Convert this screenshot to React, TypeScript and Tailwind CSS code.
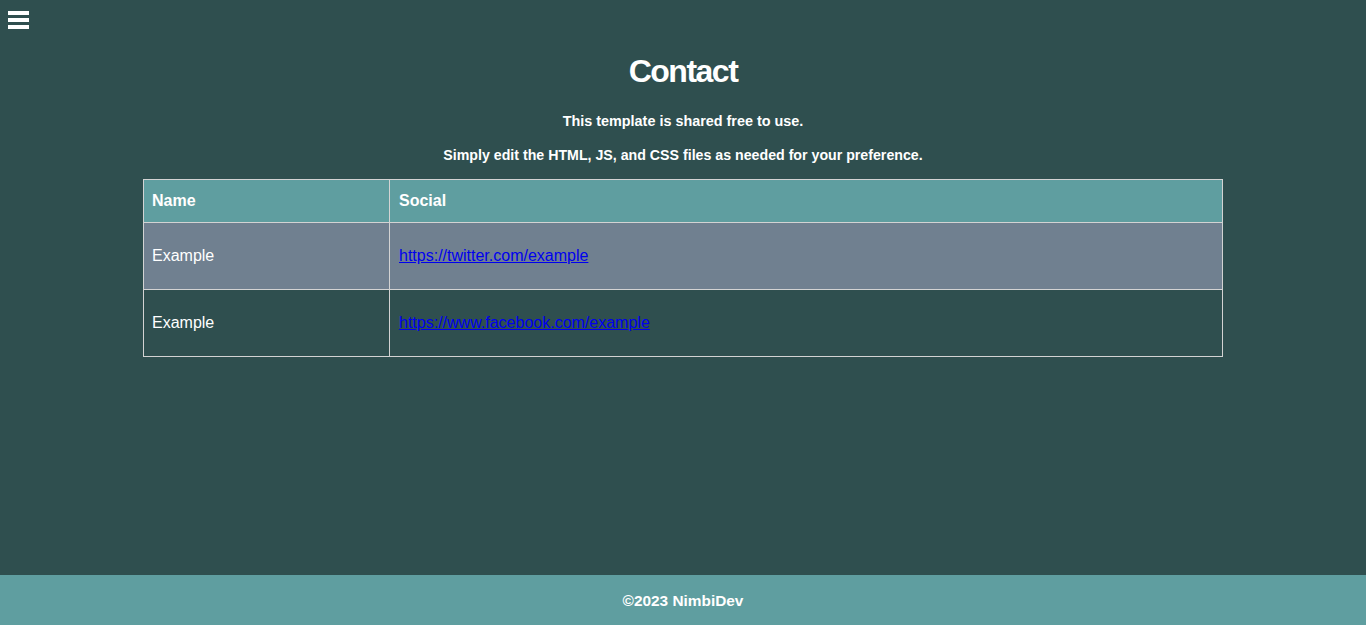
export default function App() {
    const rows = [
        { name: "Example", url: "https://twitter.com/example", bg: "bg-[#708090]" },
        { name: "Example", url: "https://www.facebook.com/example", bg: "bg-[#2f4f4f]" },
    ];

    return (
        <div className="min-h-screen flex flex-col bg-[#2f4f4f] text-white font-['Liberation_Sans',Arial,sans-serif]">
            <header className="h-[40px] px-2 pt-[11px]">
                <button className="flex flex-col gap-[3px] w-[21px]">
                    <span className="block h-[4px] w-full bg-white" />
                    <span className="block h-[4px] w-full bg-white" />
                    <span className="block h-[4px] w-full bg-white" />
                </button>
            </header>
            <main className="flex-1 flex flex-col items-center">
                <h1 className="mt-[11px] text-[32px] leading-[40px] font-bold tracking-[-1.5px]">
                    Contact
                </h1>
                <p className="mt-[21px] text-[14.4px] leading-[18px] font-bold">This template is shared free to use.</p>
                <p className="mt-[16px] text-[14.2px] leading-[18px] font-bold">
                    Simply edit the HTML, JS, and CSS files as needed for your preference.
                </p>
                <table className="mt-[15px] w-[1080px] border-collapse border border-[#d3d3d3] text-[16px]">
                    <thead>
                        <tr className="bg-[#5f9ea0] h-[43px]">
                            <th className="w-[246px] border border-[#d3d3d3] px-2 text-left font-bold">Name</th>
                            <th className="border border-[#d3d3d3] pl-[9px] pr-2 text-left font-bold">Social</th>
                        </tr>
                    </thead>
                    <tbody>
                        {rows.map((r) => (
                            <tr key={r.url} className={`${r.bg} h-[67px]`}>
                                <td className="border border-[#d3d3d3] px-2">{r.name}</td>
                                <td className="border border-[#d3d3d3] pl-[9px] pr-2">
                                    <a href="#" className="text-[#0000ee] underline">
                                        {r.url}
                                    </a>
                                </td>
                            </tr>
                        ))}
                    </tbody>
                </table>
            </main>
            <footer className="h-[50px] bg-[#5f9ea0] flex items-center justify-center text-[15.4px] font-bold pt-[1px]">
                ©2023 NimbiDev
            </footer>
        </div>
    );
}
